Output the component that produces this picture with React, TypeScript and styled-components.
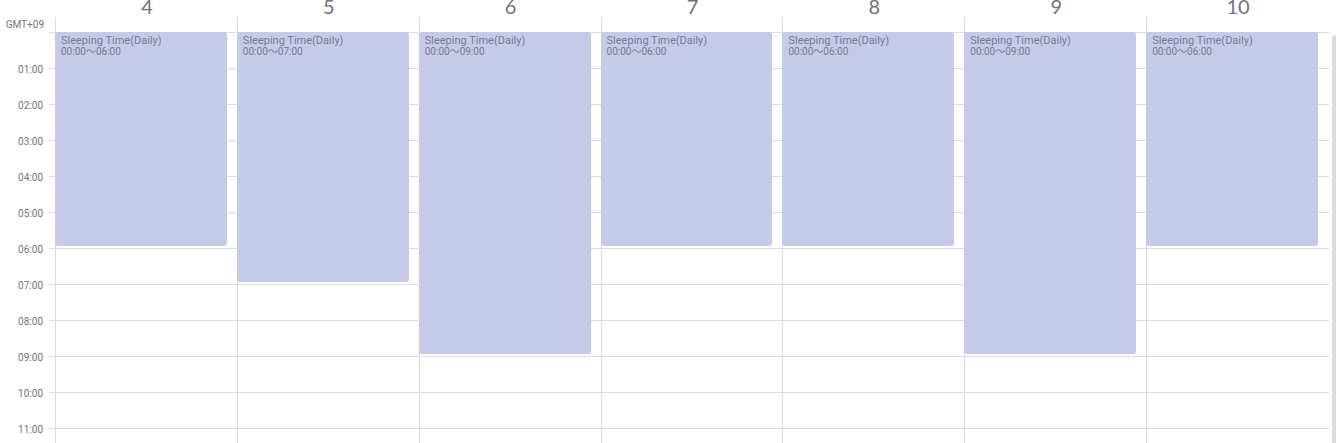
import React from "react";
import styled, { createGlobalStyle } from "styled-components";

const HOUR = 36;
const LINE = "#dadce0";

const GlobalStyle = createGlobalStyle`
  *, *::before, *::after { box-sizing: border-box; }
  body {
    margin: 0;
    background: #ffffff;
    color: #70757a;
    font-family: Roboto, "Noto Sans CJK JP", sans-serif;
  }
`;

const Calendar = styled.main`
  display: flex;
  flex-direction: column;
  height: 100vh;
  overflow: hidden;
`;

const DayHeader = styled.header`
  display: flex;
  flex: none;
  height: 17px;
  padding: 0 8px 0 55px;
`;

const DayNumber = styled.h2`
  flex: 1 1 0;
  margin: 0;
  padding-left: 2px;
  font-family: Lato, sans-serif;
  font-size: 20px;
  font-weight: 400;
  line-height: 12px;
  text-align: center;
`;

const ZoneRow = styled.div`
  display: flex;
  flex: none;
  height: 15px;
  padding-right: 8px;
`;

const ZoneLabel = styled.span`
  flex: none;
  width: 55px;
  padding-right: 11px;
  font-size: 10px;
  line-height: 16px;
  text-align: right;
`;

const ZoneCell = styled.div`
  flex: 1 1 0;
  border-left: 1px solid ${LINE};
`;

const Body = styled.div`
  display: flex;
  flex: 1;
  min-height: 0;
  overflow: hidden;
`;

const Hours = styled.div`
  flex: none;
  width: 49px;
  padding: 32px 6px 0 0;
`;

const HourLabel = styled.div`
  height: ${HOUR}px;
  font-size: 10px;
  line-height: 12px;
  text-align: right;
`;

const Columns = styled.div`
  display: flex;
  flex: 1;
  height: ${24 * HOUR}px;
  padding: 0 1px 0 6px;
  background: repeating-linear-gradient(
    to bottom,
    ${LINE} 0,
    ${LINE} 1px,
    transparent 1px,
    transparent ${HOUR}px
  );
`;

const Column = styled.section`
  flex: 1 1 0;
  min-width: 0;
  padding-right: 10px;
  border-left: 1px solid ${LINE};
`;

const Event = styled.button<{ $hours: number }>`
  display: flex;
  flex-direction: column;
  width: calc(100% + 1px);
  height: ${(p) => p.$hours * HOUR - 2}px;
  margin: 0 0 0 -1px;
  padding: 3px 6px;
  border: 0;
  border-radius: 3px;
  background: #c6cae9;
  color: #777b90;
  font-family: inherit;
  font-size: 10px;
  line-height: 11px;
  text-align: left;
  white-space: nowrap;
  overflow: hidden;
`;

const EventTitle = styled.span`
  font-size: 11px;
`;

const Scrollbar = styled.div`
  flex: none;
  width: 4px;
  margin: 3px 0 0 3px;
  border-radius: 3px 0 0 0;
  background: ${LINE};
`;

const days = [
  { day: 4, hours: 6 },
  { day: 5, hours: 7 },
  { day: 6, hours: 9 },
  { day: 7, hours: 6 },
  { day: 8, hours: 6 },
  { day: 9, hours: 9 },
  { day: 10, hours: 6 },
];

const clock = (hour: number) => `${String(hour).padStart(2, "0")}:00`;

export default function App() {
  return (
    <>
      <GlobalStyle />
      <Calendar>
        <DayHeader>
          {days.map((d) => (
            <DayNumber key={d.day}>{d.day}</DayNumber>
          ))}
        </DayHeader>
        <ZoneRow>
          <ZoneLabel>GMT+09</ZoneLabel>
          {days.map((d) => (
            <ZoneCell key={d.day} />
          ))}
        </ZoneRow>
        <Body>
          <Hours>
            {Array.from({ length: 11 }, (_, i) => (
              <HourLabel key={i}>{clock(i + 1)}</HourLabel>
            ))}
          </Hours>
          <Columns>
            {days.map((d) => (
              <Column key={d.day}>
                <Event type="button" $hours={d.hours}>
                  <EventTitle>Sleeping Time(Daily)</EventTitle>
                  <span>00:00～{clock(d.hours)}</span>
                </Event>
              </Column>
            ))}
          </Columns>
          <Scrollbar />
        </Body>
      </Calendar>
    </>
  );
}
